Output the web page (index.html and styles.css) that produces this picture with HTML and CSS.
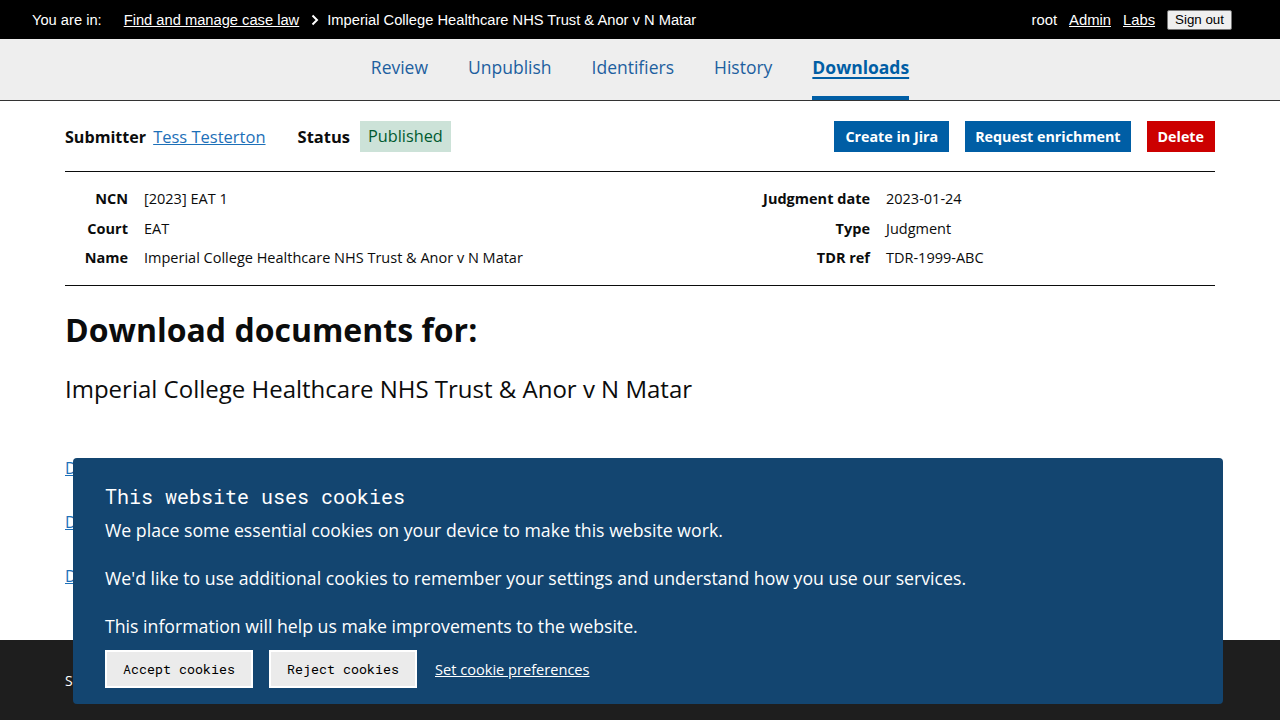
FILE: index.html
```html
<!DOCTYPE html>
<html lang="en">
<head>
<meta charset="utf-8">
<title>Downloads - Imperial College Healthcare NHS Trust &amp; Anor v N Matar</title>
<link rel="stylesheet" href="styles.css">
</head>
<body>
<header class="topbar">
  <nav class="crumbs">
    <span class="crumbs__label">You are in:</span>
    <a class="crumbs__link" href="#">Find and manage case law</a>
    <svg class="crumbs__chev" width="10" height="12" viewBox="0 0 10 12" aria-hidden="true"><path d="M2.5 1.5 L7 6 L2.5 10.5" fill="none" stroke="#fff" stroke-width="2"/></svg>
    <span class="crumbs__current">Imperial College Healthcare NHS Trust &amp; Anor v N Matar</span>
  </nav>
  <div class="userbar">
    <span class="userbar__name">root</span>
    <a class="userbar__link" href="#">Admin</a>
    <a class="userbar__link" href="#">Labs</a>
    <button class="userbar__signout">Sign out</button>
  </div>
</header>

<nav class="tabs">
  <a class="tabs__item" href="#">Review</a>
  <a class="tabs__item" href="#">Unpublish</a>
  <a class="tabs__item" href="#">Identifiers</a>
  <a class="tabs__item" href="#">History</a>
  <a class="tabs__item tabs__item--active" href="#">Downloads</a>
</nav>

<main class="page">
  <div class="summary">
    <div class="summary__info">
      <span class="summary__label">Submitter</span>
      <a class="summary__link" href="#">Tess Testerton</a>
      <span class="summary__label summary__label--status">Status</span>
      <span class="tag">Published</span>
    </div>
    <div class="summary__actions">
      <a class="btn btn--blue" href="#">Create in Jira</a>
      <a class="btn btn--blue btn--narrow" href="#">Request enrichment</a>
      <a class="btn btn--red" href="#">Delete</a>
    </div>
  </div>

  <section class="meta">
    <dl class="meta__col">
      <dt>NCN</dt><dd>[2023] EAT 1</dd>
      <dt>Court</dt><dd>EAT</dd>
      <dt>Name</dt><dd>Imperial College Healthcare NHS Trust &amp; Anor v N Matar</dd>
    </dl>
    <dl class="meta__col meta__col--right">
      <dt>Judgment date</dt><dd>2023-01-24</dd>
      <dt>Type</dt><dd>Judgment</dd>
      <dt>TDR ref</dt><dd>TDR-1999-ABC</dd>
    </dl>
  </section>

  <h1 class="title">Download documents for:</h1>
  <p class="subtitle">Imperial College Healthcare NHS Trust &amp; Anor v N Matar</p>

  <ul class="downloads">
    <li><a href="#">Download DOCX</a></li>
    <li><a href="#">Download XML</a></li>
    <li><a href="#">Download PDF</a></li>
  </ul>
</main>

<footer class="footer">
  <div class="footer__inner">Service provided by The National Archives</div>
</footer>

<div class="cookies" role="region" aria-label="Cookies">
  <h2 class="cookies__title">This website uses cookies</h2>
  <p class="cookies__text">We place some essential cookies on your device to make this website work.</p>
  <p class="cookies__text">We'd like to use additional cookies to remember your settings and understand how you use our services.</p>
  <p class="cookies__text">This information will help us make improvements to the website.</p>
  <div class="cookies__actions">
    <button class="cookies__btn">Accept cookies</button>
    <button class="cookies__btn">Reject cookies</button>
    <a class="cookies__link" href="#">Set cookie preferences</a>
  </div>
</div>
</body>
</html>
```

FILE: styles.css
```css
* { box-sizing: border-box; }
html, body { margin: 0; padding: 0; }
body {
  font-family: "Open Sans", "Noto Sans", sans-serif;
  color: #0b0c0c;
  background: #fff;
}

.topbar {
  background: #000;
  color: #fff;
  height: 39px;
  display: flex;
  align-items: center;
  justify-content: space-between;
  padding: 0 48px 0 32px;
  font-family: "Liberation Sans", Arial, sans-serif;
  font-size: 15px;
}
.crumbs { display: flex; align-items: center; font-size: 14.7px; }
.crumbs__label { margin-right: 22px; }
.crumbs__link { color: #fff; text-decoration: underline; }
.crumbs__chev { margin: 0 7px 0 11px; }
.crumbs__current { color: #fff; }
.userbar { display: flex; align-items: center; font-size: 14.8px; }
.userbar__name { margin-right: 12px; }
.userbar__link { color: #fff; margin-right: 12px; }
.userbar__signout {
  font-family: "Liberation Sans", Arial, sans-serif;
  font-size: 13.33px;
  background: #efefef;
  color: #000;
  border: 1px solid #767676;
  border-radius: 2px;
  padding: 1px 7px;
  height: 20px;
}

.tabs {
  background: #eee;
  border-bottom: 1px solid #333;
  height: 62px;
  display: flex;
  justify-content: center;
  gap: 40px;
}
.tabs__item {
  font-size: 17.5px;
  color: #1d5f9f;
  text-decoration: none;
  display: flex;
  align-items: center;
  padding-bottom: 1px;
  border-bottom: 4px solid transparent;
}
.tabs__item--active {
  font-weight: 700;
  text-decoration: underline;
  text-underline-offset: 3px;
  text-decoration-thickness: 2px;
  color: #005ea5;
  border-bottom-color: #005ea5;
}

.page { padding: 20px 65px 0; }

.summary {
  display: flex;
  justify-content: space-between;
  align-items: center;
  padding-bottom: 19px;
  border-bottom: 1px solid #0b0c0c;
}
.summary__info { display: flex; align-items: center; font-size: 16.5px; }
.summary__label { font-weight: 700; margin-right: 7px; font-size: 16.1px; }
.summary__label--status { margin-left: 32px; margin-right: 10px; font-size: 16.5px; }
.summary__link { color: #1d70b8; text-decoration: underline; }
.tag {
  background: #cce2d8;
  color: #005a30;
  height: 31px;
  line-height: 31px;
  padding: 0 8px;
  font-size: 16.3px;
}
.summary__actions { display: flex; gap: 16px; }
.btn {
  height: 31px;
  line-height: 31px;
  padding: 0 11px;
  font-size: 14.3px;
  font-weight: 700;
  color: #fff;
  text-decoration: none;
}
.btn--narrow { padding: 0 10px; }
.btn--blue { background: #005ea5; }
.btn--red { background: #c00; }

.meta {
  display: flex;
  justify-content: space-between;
  padding: 17px 0 17px;
  border-bottom: 1px solid #0b0c0c;
  font-size: 14.5px;
}
.meta__col {
  margin: 0;
  display: grid;
  grid-template-columns: 63px auto;
  column-gap: 16px;
  row-gap: 10px;
  line-height: 19.5px;
}
.meta__col--right { grid-template-columns: auto 329px; }
.meta__col dt { font-weight: 700; text-align: right; }
.meta__col dd { margin: 0; }

.title {
  font-size: 32px;
  font-weight: 700;
  margin: 24px 0 0;
  line-height: 40px;
}
.subtitle {
  font-size: 24px;
  margin: 23px 0 0;
  line-height: 32px;
}
.downloads {
  list-style: none;
  margin: 52px 0 0;
  padding: 0;
  font-size: 16px;
}
.downloads li { height: 54px; }
.downloads a { color: #1d70b8; }

.footer {
  background: #1e1e1e;
  color: #fff;
  margin-top: 21px;
  height: 120px;
}
.footer__inner { padding: 31px 65px; font-size: 14px; }

.cookies {
  position: fixed;
  left: 73px;
  bottom: 16px;
  width: 1150px;
  height: 246px;
  background: #134570;
  color: #fff;
  border-radius: 4px;
  padding: 24px 32px 16px;
}
.cookies__title {
  font-family: "Roboto Mono", "DejaVu Sans Mono", "Liberation Mono", monospace;
  font-weight: 400;
  font-size: 20px;
  line-height: 28px;
  margin: 0 0 8px;
}
.cookies__text {
  font-size: 17.7px;
  line-height: 24px;
  margin: 0 0 24px;
}
.cookies__text:nth-of-type(3) { margin-bottom: 0; }
.cookies__actions {
  display: flex;
  align-items: center;
  gap: 16px;
  margin-top: 12px;
}
.cookies__btn {
  font-family: "Roboto Mono", "DejaVu Sans Mono", "Liberation Mono", monospace;
  font-size: 13.33px;
  background: #ebebeb;
  color: #000;
  border: 2px solid #fff;
  width: 148px;
  height: 38px;
  padding: 0;
}
.cookies__link { color: #fff; font-size: 14.6px; margin-left: 2px; }
```
